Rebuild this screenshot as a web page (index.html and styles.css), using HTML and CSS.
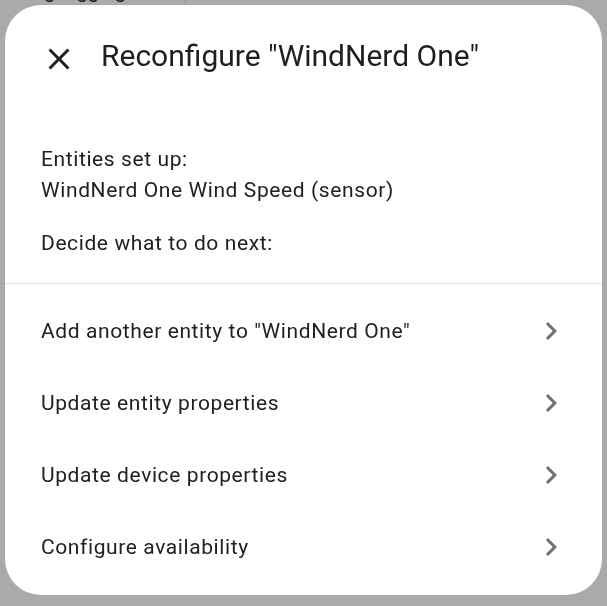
FILE: index.html
```html
<!DOCTYPE html>
<html lang="en">
  <head>
    <meta charset="UTF-8">
    <meta name="viewport" content="width=device-width, initial-scale=1.0">
    <title>Reconfigure</title>
    <link rel="stylesheet" href="styles.css">
  </head>
  <body>
    <div class="page">
      <div class="page-top">
        <div class="page-side"><span class="page-text">Debug logging</span></div>
      </div>
    </div>

    <div class="dialog">
      <div class="dialog-header">
        <button class="icon-button close-button" aria-label="Close">
          <svg viewBox="0 0 24 24" width="36" height="36"><path d="M19 6.41L17.59 5 12 10.59 6.41 5 5 6.41 10.59 12 5 17.59 6.41 19 12 13.41 17.59 19 19 17.59 13.41 12z"/></svg>
        </button>
        <h2 class="title">Reconfigure "WindNerd One"</h2>
      </div>

      <div class="dialog-content">
        <p>Entities set up:<br>WindNerd One Wind Speed (sensor)</p>
        <p>Decide what to do next:</p>
      </div>

      <div class="menu">
        <div class="menu-item">
          <span>Add another entity to "WindNerd One"</span>
          <svg class="chevron" viewBox="0 0 24 24" width="36" height="36"><path d="M10 6L8.59 7.41 13.17 12l-4.58 4.59L10 18l6-6z"/></svg>
        </div>
        <div class="menu-item">
          <span>Update entity properties</span>
          <svg class="chevron" viewBox="0 0 24 24" width="36" height="36"><path d="M10 6L8.59 7.41 13.17 12l-4.58 4.59L10 18l6-6z"/></svg>
        </div>
        <div class="menu-item">
          <span>Update device properties</span>
          <svg class="chevron" viewBox="0 0 24 24" width="36" height="36"><path d="M10 6L8.59 7.41 13.17 12l-4.58 4.59L10 18l6-6z"/></svg>
        </div>
        <div class="menu-item">
          <span>Configure availability</span>
          <svg class="chevron" viewBox="0 0 24 24" width="36" height="36"><path d="M10 6L8.59 7.41 13.17 12l-4.58 4.59L10 18l6-6z"/></svg>
        </div>
      </div>
    </div>
  </body>
</html>
```

FILE: styles.css
```css
:root {
  font-family: Roboto, "Noto Sans", sans-serif;
  color: #212121;
}

body {
  margin: 0;
  background-color: #aaaaaa;
  overflow: hidden;
}

/* the page behind the scrim */
.page-top {
  height: 28px;
  border-bottom: 1px solid #9d9d9d;
  width: 5px;
}
.page-side {
  width: 184px;
  height: 5px;
  border-right: 1px solid #9d9d9d;
  overflow: hidden;
  position: relative;
}
.page-text {
  position: absolute;
  left: -2px;
  top: -21px;
  font-size: 20px;
  color: #1c1c1c;
  white-space: nowrap;
}

/* dialog sits over the page */
.dialog {
  position: fixed;
  left: 5px;
  top: 5px;
  width: 597px;
  height: 590px;
  background-color: #ffffff;
  border-radius: 36px;
  display: flex;
  flex-direction: column;
  overflow: hidden;
}

.dialog-header {
  display: flex;
  align-items: flex-start;
  gap: 24px;
  padding: 36px 36px 0 36px;
}
.icon-button {
  appearance: none;
  border: none;
  background: none;
  padding: 0;
  width: 36px;
  height: 36px;
  display: flex;
  fill: #212121;
}
.title {
  margin: 0;
  font-size: 30px;
  font-weight: 400;
  line-height: 30px;
  color: #1f1f1f;
}

.dialog-content {
  padding: 67px 36px 24px 36px;
  border-bottom: 1px solid #e0e0e0;
  font-size: 21px;
  line-height: 31px;
  letter-spacing: 0.6px;
  > p {
    margin: 0;
  }
  > p + p {
    margin-top: 22px;
  }
}

.menu {
  padding: 11px 0 12px 0;
}
.menu-item {
  height: 72px;
  display: flex;
  align-items: center;
  justify-content: space-between;
  padding: 0 33px 0 36px;
  font-size: 21px;
  letter-spacing: 0.6px;
  .chevron {
    fill: #727272;
  }
}
```
